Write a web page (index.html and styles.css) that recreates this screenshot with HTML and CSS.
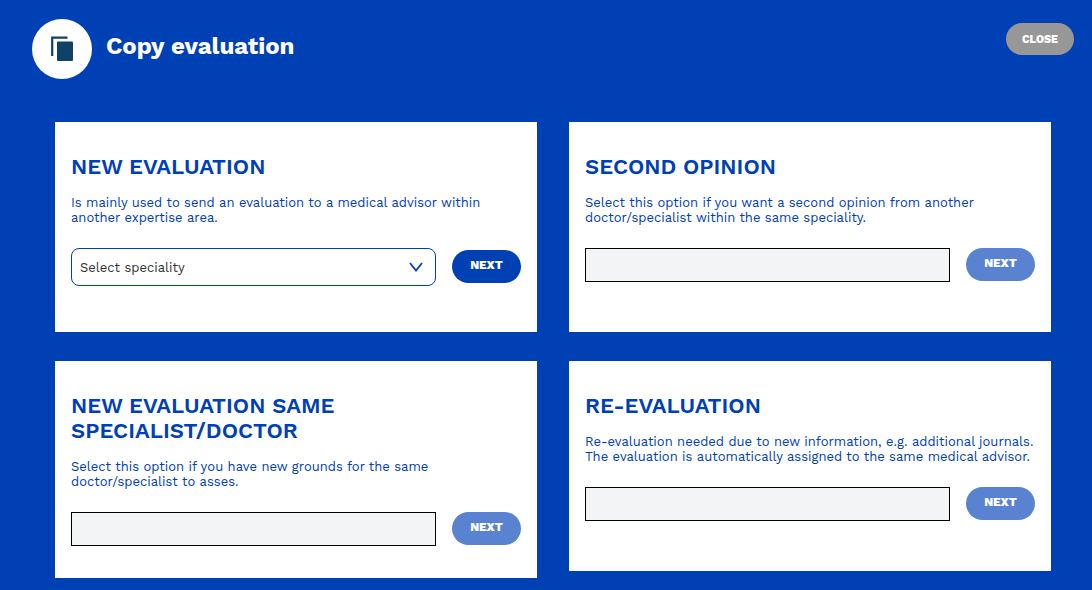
FILE: index.html
```html
<!DOCTYPE html>
<html lang="en">
<head>
<meta charset="utf-8">
<meta name="viewport" content="width=device-width, initial-scale=1">
<title>Copy evaluation</title>
<link rel="stylesheet" href="styles.css">
</head>
<body>
<header class="header">
  <span class="header-icon">
    <svg width="24" height="26" viewBox="0 0 24 26" aria-hidden="true">
      <path d="M2.200 20V1.700H17.500" fill="none" stroke="#0f4266" stroke-width="2.200"/>
      <rect x="7" y="5.500" width="16" height="19.500" rx="1" fill="#0f4266"/>
    </svg>
  </span>
  <h1 class="header-title">Copy evaluation</h1>
  <button class="close" type="button">CLOSE</button>
</header>
<main class="cards">
  <section class="card">
    <h2 class="card-title">NEW EVALUATION</h2>
    <p class="card-text" id="text-new">Is mainly used to send an evaluation to a medical advisor within another expertise area.</p>
    <form class="card-form">
      <div class="select-box">
        <select class="select" aria-labelledby="text-new"><option>Select speciality</option></select>
        <svg class="chevron" width="14" height="10" viewBox="0 0 14 10" aria-hidden="true"><path d="M1 1L7 8.500L13 1" fill="none" stroke="#0040b5" stroke-width="1.800"/></svg>
      </div>
      <button class="next next-tall" type="button">NEXT</button>
    </form>
  </section>
  <section class="card">
    <h2 class="card-title">SECOND OPINION</h2>
    <p class="card-text" id="text-second">Select this option if you want a second opinion from another doctor/specialist within the same speciality.</p>
    <form class="card-form">
      <input class="field" type="text" aria-labelledby="text-second" disabled>
      <button class="next" type="button" disabled>NEXT</button>
    </form>
  </section>
  <section class="card">
    <h2 class="card-title">NEW EVALUATION SAME SPECIALIST/DOCTOR</h2>
    <p class="card-text" id="text-same">Select this option if you have new grounds for the same doctor/specialist to asses.</p>
    <form class="card-form">
      <input class="field" type="text" aria-labelledby="text-same" disabled>
      <button class="next" type="button" disabled>NEXT</button>
    </form>
  </section>
  <section class="card">
    <h2 class="card-title">RE-EVALUATION</h2>
    <p class="card-text" id="text-re">Re-evaluation needed due to new information, e.g. additional journals. The evaluation is automatically assigned to the same medical advisor.</p>
    <form class="card-form">
      <input class="field" type="text" aria-labelledby="text-re" disabled>
      <button class="next" type="button" disabled>NEXT</button>
    </form>
  </section>
</main>
</body>
</html>
```
FILE: styles.css
```css
* { box-sizing: border-box; }
body {
  margin: 0;
  background: #0040b5;
  color: #0040b5;
  font-family: "Work Sans", Inter, sans-serif;
}
.header {
  display: flex;
  align-items: flex-start;
  gap: 14px;
  padding: 19px 18px 0 32px;
}
.header-icon {
  display: grid;
  place-items: center;
  width: 60px;
  height: 60px;
  border-radius: 50%;
  background: #fff;
}
.header-title {
  margin: 12px 0 0;
  color: #fff;
  font-size: 24px;
  line-height: 30px;
  font-weight: 700;
}
.close, .next {
  border: 0;
  border-radius: 17px;
  color: #fff;
  font: 800 12px/16px "Work Sans", Inter, sans-serif;
}
.close {
  width: 68px;
  height: 32px;
  margin: 4px 0 0 auto;
  padding: 1px 0 0;
  background: #979797;
  font-size: 11px;
}
.cards {
  display: grid;
  grid-template-columns: 1fr 1fr;
  align-items: start;
  gap: 29px 32px;
  padding: 43px 41px 12px 55px;
}
.card {
  min-height: 210px;
  padding: 32px 16px;
  background: #fff;
}
.card-title {
  margin: 0 0 16px;
  font-size: 22px;
  line-height: 25px;
  font-weight: 600;
}
.card-text {
  margin: 0 0 23px;
  font-size: 13px;
  line-height: 15px;
}
.card-form {
  display: flex;
  align-items: flex-start;
  gap: 16px;
}
.field {
  flex: 1;
  min-width: 0;
  height: 34px;
  border: 1px solid #000;
  background: #f3f4f6;
}
.select-box {
  flex: 1;
  display: grid;
  align-items: center;
  min-width: 0;
  margin-bottom: -4px;
}
.select, .chevron { grid-area: 1 / 1; }
.select {
  appearance: none;
  width: 100%;
  height: 38px;
  padding: 0 32px 0 8px;
  border: 1px solid #0040b5;
  border-radius: 8px;
  background: #fff;
  color: #333;
  font: 13px "Work Sans", Inter, sans-serif;
}
.chevron {
  justify-self: end;
  margin-right: 13px;
  pointer-events: none;
}
.next {
  width: 69px;
  height: 33px;
  padding: 0 0 3px;
  background: #0040b5;
}
.next:disabled { background: #5983d0; }
.next-tall { margin-top: 2px; }
```
